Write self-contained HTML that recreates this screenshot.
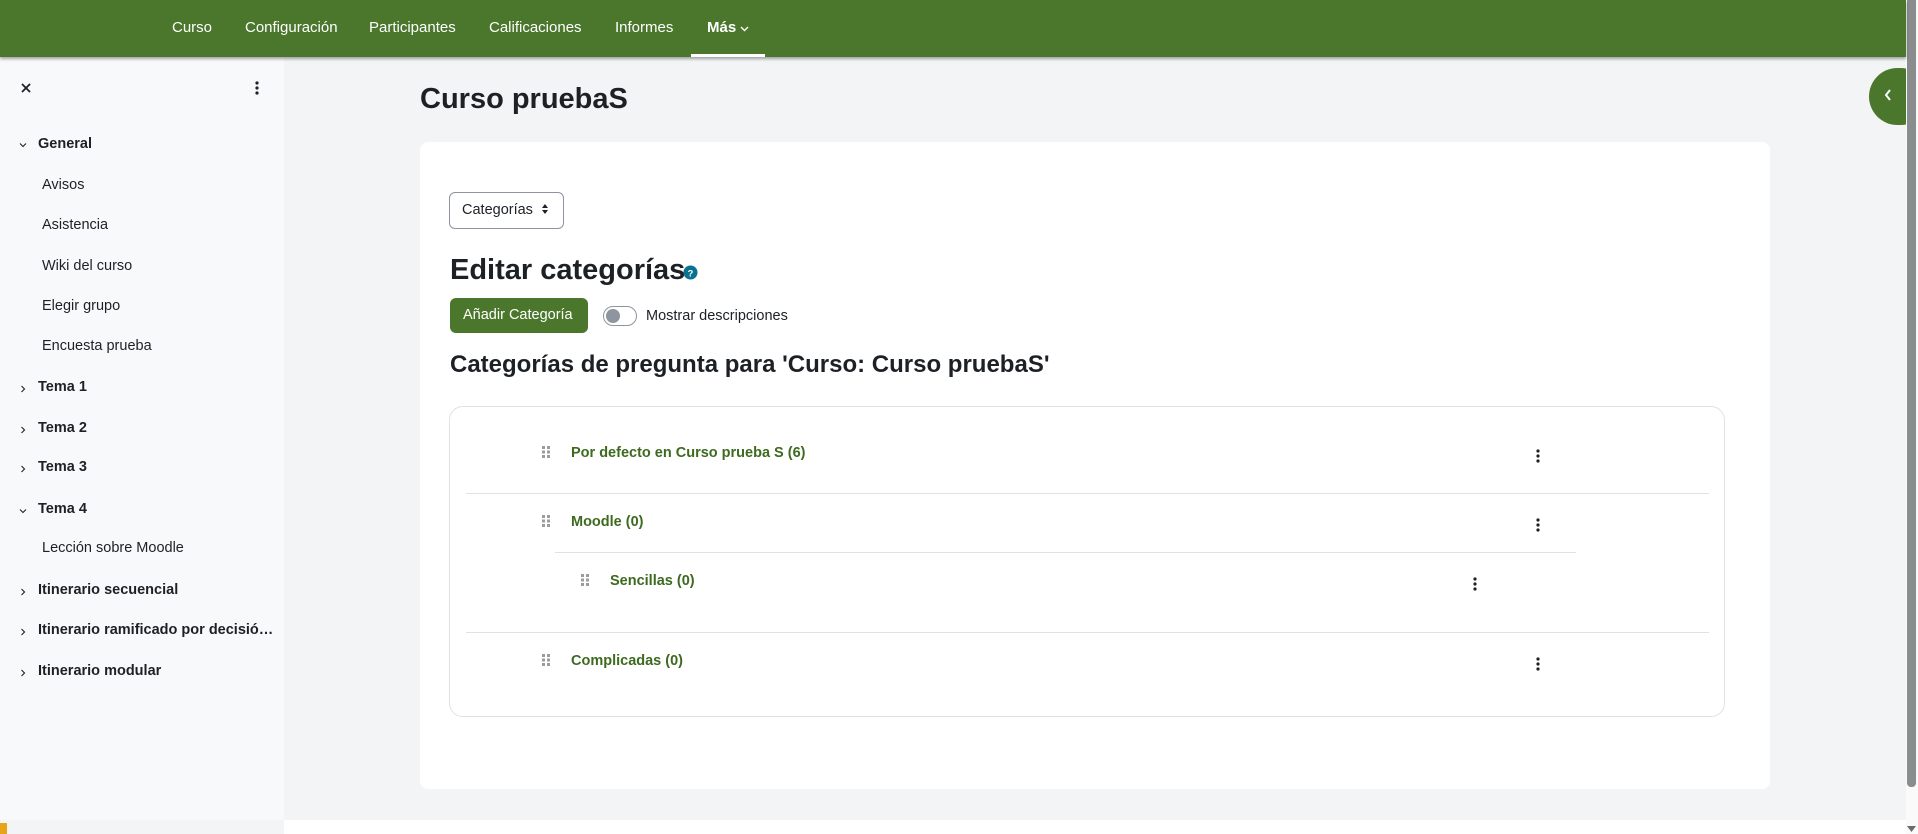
<!DOCTYPE html>
<html><head><meta charset="utf-8">
<style>
*{box-sizing:border-box;margin:0;padding:0}
body{width:1918px;height:834px;overflow:hidden;background:#f3f4f6;font-family:"Liberation Sans",Arial,sans-serif;color:#1d2125;position:relative;white-space:nowrap}
.nav{position:absolute;left:0;top:0;width:1906px;height:57px;background:#4a772b;box-shadow:0 2px 3px rgba(0,0,0,.35);z-index:2}
.nav span{position:absolute;top:19px;color:#fff;font-size:15px}
.nav .u{position:absolute;left:691px;top:54px;width:74px;height:3px;background:#fff}
.side{position:absolute;left:0;top:57px;width:284px;height:763px;background:#f8f9fa}
.t{position:absolute;font-size:14.5px;white-space:nowrap}
.b{font-weight:bold;left:38px}
.s{left:42px}
.chev{position:absolute;left:19px;width:8px;height:8px}
.card{position:absolute;left:420px;top:142px;width:1350px;height:647px;background:#fff;border-radius:8px}
.list{position:absolute;left:449px;top:406px;width:1276px;height:311px;border:1px solid #dee2e6;border-radius:14px}
.sep{position:absolute;height:1px;background:#dee2e6}
.cat{position:absolute;color:#3d6a1f;font-weight:bold;font-size:14.5px}
.drag{position:absolute;width:8px;height:12px}
.keb{position:absolute;width:4px;height:14px}
.footer{position:absolute;left:284px;top:820px;width:1622px;height:14px;background:#fff}
</style></head><body>
<div class="nav">
<span style="left:172px">Curso</span>
<span style="left:245px">Configuración</span>
<span style="left:369px">Participantes</span>
<span style="left:489px">Calificaciones</span>
<span style="left:615px">Informes</span>
<span style="left:707px;font-weight:bold">Más <svg width="9" height="6" viewBox="0 0 9 6"><path d="M1 1l3.5 3.5L8 1" stroke="#fff" stroke-width="1.4" fill="none"/></svg></span>
<div class="u"></div>
</div>
<div class="side">
<svg style="position:absolute;left:21px;top:26px" width="10" height="10" viewBox="0 0 10 10"><path d="M1 1l8 8M9 1l-8 8" stroke="#1d2125" stroke-width="1.8"/></svg>
<svg style="position:absolute;left:255px;top:24px" width="4" height="14" viewBox="0 0 4 14"><circle cx="2" cy="2" r="1.6" fill="#1d2125"/><circle cx="2" cy="7" r="1.6" fill="#1d2125"/><circle cx="2" cy="12" r="1.6" fill="#1d2125"/></svg>
</div>
<svg class="chev" style="top:141px" viewBox="0 0 8 8"><path d="M1 2.5l3 3 3-3" stroke="#1d2125" fill="none" stroke-width="1.1"/></svg>
<div class="t b" style="top:136px">General</div>
<div class="t s" style="top:177px">Avisos</div>
<div class="t s" style="top:217px">Asistencia</div>
<div class="t s" style="top:258px">Wiki del curso</div>
<div class="t s" style="top:298px">Elegir grupo</div>
<div class="t s" style="top:338px">Encuesta prueba</div>
<svg class="chev" style="top:385px" viewBox="0 0 8 8"><path d="M2.5 1l3 3-3 3" stroke="#1d2125" fill="none" stroke-width="1.1"/></svg>
<div class="t b" style="top:379px">Tema 1</div>
<svg class="chev" style="top:426px" viewBox="0 0 8 8"><path d="M2.5 1l3 3-3 3" stroke="#1d2125" fill="none" stroke-width="1.1"/></svg>
<div class="t b" style="top:420px">Tema 2</div>
<svg class="chev" style="top:465px" viewBox="0 0 8 8"><path d="M2.5 1l3 3-3 3" stroke="#1d2125" fill="none" stroke-width="1.1"/></svg>
<div class="t b" style="top:459px">Tema 3</div>
<svg class="chev" style="top:507px" viewBox="0 0 8 8"><path d="M1 2.5l3 3 3-3" stroke="#1d2125" fill="none" stroke-width="1.1"/></svg>
<div class="t b" style="top:501px">Tema 4</div>
<div class="t s" style="top:540px">Lección sobre Moodle</div>
<svg class="chev" style="top:588px" viewBox="0 0 8 8"><path d="M2.5 1l3 3-3 3" stroke="#1d2125" fill="none" stroke-width="1.1"/></svg>
<div class="t b" style="top:582px">Itinerario secuencial</div>
<svg class="chev" style="top:628px" viewBox="0 0 8 8"><path d="M2.5 1l3 3-3 3" stroke="#1d2125" fill="none" stroke-width="1.1"/></svg>
<div class="t b" style="top:622px">Itinerario ramificado por decisió…</div>
<svg class="chev" style="top:669px" viewBox="0 0 8 8"><path d="M2.5 1l3 3-3 3" stroke="#1d2125" fill="none" stroke-width="1.1"/></svg>
<div class="t b" style="top:663px">Itinerario modular</div>
<div style="position:absolute;left:0;top:823px;width:7px;height:11px;background:#e8a317"></div>

<div style="position:absolute;left:420px;top:83px;font-size:29px;font-weight:bold">Curso pruebaS</div>
<div class="card"></div>
<div style="position:absolute;left:449px;top:192px;width:115px;height:37px;border:1px solid #8f959e;border-radius:6px;font-size:14.5px;padding:9px 0 0 12px">Categorías <svg width="8" height="12" viewBox="0 0 8 12" style="margin-left:4px;vertical-align:-1px"><path d="M1 5l3-4 3 4zM1 7l3 4 3-4z" fill="#1d2125"/></svg></div>
<div style="position:absolute;left:450px;top:254px;font-size:29px;font-weight:bold">Editar categorías</div>
<svg style="position:absolute;left:683px;top:265px" width="15" height="15" viewBox="0 0 16 16"><circle cx="8" cy="8" r="7.5" fill="#0b7190"/><text x="8" y="12" font-size="10" font-weight="bold" fill="#fff" text-anchor="middle" font-family="Liberation Sans">?</text></svg>
<div style="position:absolute;left:450px;top:298px;width:138px;height:35px;background:#4a772b;border-radius:6px;color:#fff;font-size:14.5px;padding:9px 0 0 13px">Añadir Categoría</div>
<div style="position:absolute;left:603px;top:306px;width:34px;height:20px;border:1px solid #8f959e;border-radius:10px"><div style="position:absolute;left:2px;top:2px;width:14px;height:14px;border-radius:50%;background:#8f959e"></div></div>
<div style="position:absolute;left:646px;top:308px;font-size:14.5px">Mostrar descripciones</div>
<div style="position:absolute;left:450px;top:351px;font-size:24px;font-weight:bold">Categorías de pregunta para 'Curso: Curso pruebaS'</div>

<div class="list"></div>
<div class="sep" style="left:466px;top:493px;width:1243px"></div>
<div class="sep" style="left:555px;top:552px;width:1021px"></div>
<div class="sep" style="left:466px;top:632px;width:1243px"></div>

<svg class="drag" style="left:542px;top:446px" viewBox="0 0 8 12"><g fill="#9a9da0"><rect x="0" y="0" width="3" height="3"/><rect x="5" y="0" width="3" height="3"/><rect x="0" y="4.5" width="3" height="3"/><rect x="5" y="4.5" width="3" height="3"/><rect x="0" y="9" width="3" height="3"/><rect x="5" y="9" width="3" height="3"/></g></svg>
<div class="cat" style="left:571px;top:445px">Por defecto en Curso prueba S (6)</div>
<svg class="drag" style="left:542px;top:515px" viewBox="0 0 8 12"><g fill="#9a9da0"><rect x="0" y="0" width="3" height="3"/><rect x="5" y="0" width="3" height="3"/><rect x="0" y="4.5" width="3" height="3"/><rect x="5" y="4.5" width="3" height="3"/><rect x="0" y="9" width="3" height="3"/><rect x="5" y="9" width="3" height="3"/></g></svg>
<div class="cat" style="left:571px;top:514px">Moodle (0)</div>
<svg class="drag" style="left:581px;top:574px" viewBox="0 0 8 12"><g fill="#9a9da0"><rect x="0" y="0" width="3" height="3"/><rect x="5" y="0" width="3" height="3"/><rect x="0" y="4.5" width="3" height="3"/><rect x="5" y="4.5" width="3" height="3"/><rect x="0" y="9" width="3" height="3"/><rect x="5" y="9" width="3" height="3"/></g></svg>
<div class="cat" style="left:610px;top:573px">Sencillas (0)</div>
<svg class="drag" style="left:542px;top:654px" viewBox="0 0 8 12"><g fill="#9a9da0"><rect x="0" y="0" width="3" height="3"/><rect x="5" y="0" width="3" height="3"/><rect x="0" y="4.5" width="3" height="3"/><rect x="5" y="4.5" width="3" height="3"/><rect x="0" y="9" width="3" height="3"/><rect x="5" y="9" width="3" height="3"/></g></svg>
<div class="cat" style="left:571px;top:653px">Complicadas (0)</div>

<svg class="keb" style="left:1536px;top:449px" viewBox="0 0 4 14"><g fill="#1d2125"><circle cx="2" cy="2" r="1.6"/><circle cx="2" cy="7" r="1.6"/><circle cx="2" cy="12" r="1.6"/></g></svg>
<svg class="keb" style="left:1536px;top:518px" viewBox="0 0 4 14"><g fill="#1d2125"><circle cx="2" cy="2" r="1.6"/><circle cx="2" cy="7" r="1.6"/><circle cx="2" cy="12" r="1.6"/></g></svg>
<svg class="keb" style="left:1473px;top:577px" viewBox="0 0 4 14"><g fill="#1d2125"><circle cx="2" cy="2" r="1.6"/><circle cx="2" cy="7" r="1.6"/><circle cx="2" cy="12" r="1.6"/></g></svg>
<svg class="keb" style="left:1536px;top:657px" viewBox="0 0 4 14"><g fill="#1d2125"><circle cx="2" cy="2" r="1.6"/><circle cx="2" cy="7" r="1.6"/><circle cx="2" cy="12" r="1.6"/></g></svg>

<div style="position:absolute;left:1869px;top:68px;width:60px;height:57px;border-radius:29px;background:#4a772b"></div>
<svg style="position:absolute;left:1884px;top:88px" width="8" height="14" viewBox="0 0 8 14"><path d="M6 2L2 7l4 5" stroke="#fff" stroke-width="2" fill="none"/></svg>
<div class="footer"></div>
<div style="position:absolute;left:1906px;top:0;width:12px;height:834px;background:#fafafa"></div>
<div style="position:absolute;left:1907px;top:0;width:9px;height:787px;background:#8a8d8d;border-radius:0 0 4px 4px"></div>
<svg style="position:absolute;left:1907px;top:826px" width="9" height="6" viewBox="0 0 9 6"><path d="M0 0h9L4.5 6z" fill="#6b6b6b"/></svg>
</body></html>
